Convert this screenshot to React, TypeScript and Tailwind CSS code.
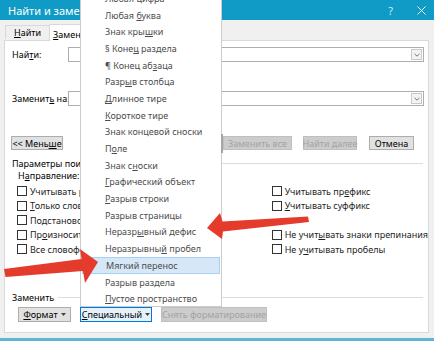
import React from 'react';

const font = "font-['Segoe_UI','Noto_Sans',sans-serif]";

const Check = ({ label }: { label: React.ReactNode }) => (
  <div className="flex items-center gap-[3px] h-[14.5px]">
    <span className="w-[10px] h-[10px] border border-[#333] bg-white shrink-0" />
    <span className="whitespace-nowrap text-[#1e1e1e]">{label}</span>
  </div>
);

const Button = ({
  children,
  className,
}: {
  children: React.ReactNode;
  className: string;
}) => (
  <div
    className={`flex items-center justify-center whitespace-nowrap border shrink-0 ${className}`}
  >
    {children}
  </div>
);

const Caret = () => (
  <svg width="5" height="3" viewBox="0 0 5 3" className="ml-[3px]">
    <path d="M0 0h5L2.5 3z" fill="#444" />
  </svg>
);

const ComboInput = () => (
  <div className="flex-1 h-[15px] border border-[#abadb3] bg-white flex justify-end">
    <div className="w-[11px] my-[1px] mr-[1px] border border-[#c9c9c9] bg-[#f3f3f3] flex items-center justify-center">
      <svg width="6" height="4" viewBox="0 0 6 4">
        <path d="M0.5 0.8L3 3.2L5.5 0.8" stroke="#666" strokeWidth="0.9" fill="none" />
      </svg>
    </div>
  </div>
);

const menuItems: React.ReactNode[] = [
  <>Любая цифра</>,
  <>Любая <u>б</u>уква</>,
  <>Знак кры<u>ш</u>ки</>,
  <>§ Коне<u>ц</u> раздела</>,
  <>¶ Конец аб<u>з</u>аца</>,
  <>Разр<u>ы</u>в столбца</>,
  <><u>Д</u>линное тире</>,
  <><u>К</u>ороткое тире</>,
  <>Знак концевой сноски</>,
  <>П<u>о</u>ле</>,
  <>Знак с<u>н</u>оски</>,
  <><u>Г</u>рафический объект</>,
  <><u>Р</u>азрыв строки</>,
  <>Разрыв страницы</>,
  <>Неразр<u>ы</u>вный дефис</>,
  <>Неразрывны<u>й</u> пробел</>,
  <>Мягкий перенос</>,
  <>Разрыв раздела</>,
  <><u>П</u>устое пространство</>,
];

export default function App() {
  return (
    <div
      className={`relative w-[434px] h-[341px] overflow-hidden bg-[#f0f0f0] flex flex-col text-[9px] leading-none text-black ${font}`}
    >
      {/* Title bar */}
      <div className="h-[20px] bg-[#0f9bc6] flex items-center pl-[8px] pr-[8px] text-white shrink-0">
        <span className="text-[11px]">Найти и заменить</span>
        <div className="ml-auto flex items-center">
          <span className="text-[11px] text-[#cfeaf5] mr-[24px]">?</span>
          <svg width="9" height="9" viewBox="0 0 9 9">
            <path d="M0.5 0.5L8.5 8.5M8.5 0.5L0.5 8.5" stroke="white" strokeWidth="1" />
          </svg>
        </div>
      </div>

      {/* Tabs */}
      <div className="h-[20px] flex items-end pl-[5px] shrink-0">
        <div className="h-[14px] px-[8px] flex items-center border-t border-l border-[#d9d9d9] bg-[#f0f0f0] mb-px">
          <span>
            <u>Н</u>айти
          </span>
        </div>
        <div className="h-[17px] pl-[3px] pr-[6px] flex items-center border-t border-l border-r border-[#d9d9d9] bg-white -mb-px z-[1] pt-[3px]">
          <span>
            <u>З</u>аменить
          </span>
        </div>
      </div>

      {/* Panel */}
      <div className="flex-1 mx-[4px] mr-[5px] border border-[#d9d9d9] bg-white flex flex-col">
        <div className="mt-[6px] h-[15px] flex items-center pl-[7px] pr-[4px]">
          <span className="w-[56px] shrink-0">
            Най<u>т</u>и:
          </span>
          <ComboInput />
        </div>
        <div className="mt-[29px] h-[15px] flex items-center pl-[7px] pr-[4px]">
          <span className="w-[56px] shrink-0 whitespace-nowrap">
            Заменит<u>ь</u> на:
          </span>
          <ComboInput />
        </div>

        <div className="mt-[30px] h-[14px] flex items-stretch pl-[6px] pr-[14px]">
          <Button className="w-[52px] bg-[#e1e1e1] border-[#adadad]">
            <span>&lt;&lt; Мень<u>ш</u>е</span>
          </Button>
          <div className="ml-auto flex items-stretch gap-[11px]">
            <Button className="w-[60px] bg-[#cccccc] border-[#bfbfbf] text-[#9a9a9a]">
              <span>Заменить</span>
            </Button>
            <Button className="w-[69px] bg-[#cccccc] border-[#bfbfbf] text-[#a3a3a3]">
              <span>Заменить все</span>
            </Button>
            <Button className="w-[54px] bg-[#cccccc] border-[#bfbfbf] text-[#a3a3a3]">
              <span>Найти далее</span>
            </Button>
            <Button className="w-[45px] bg-[#e1e1e1] border-[#adadad] ml-px">
              <span>Отмена</span>
            </Button>
          </div>
        </div>

        <div className="mt-[7px] h-[12px] flex items-center pl-[7px] pr-[5px]">
          <span className="whitespace-nowrap">Параметры поиска</span>
          <div className="flex-1 h-px bg-[#dcdcdc] ml-[4px]" />
        </div>
        <div className="h-[12px] flex items-center pl-[13px]">
          <span>
            Н<u>а</u>правление:
          </span>
        </div>

        <div className="mt-[3px] flex pl-[12px]">
          <div className="w-[265px] flex flex-col">
            <Check label={<>Учитывать <u>р</u>егистр</>} />
            <Check label={<><u>Т</u>олько слово целиком</>} />
            <Check label={<>По<u>д</u>становочные знаки</>} />
            <Check label={<>Пр<u>о</u>износится как</>} />
            <Check label={<>Все словофор<u>м</u>ы</>} />
          </div>
          <div className="flex flex-col">
            <Check label={<>Учитывать пр<u>е</u>фикс</>} />
            <Check label={<><u>У</u>читывать суффикс</>} />
            <div className="h-[14.5px]" />
            <Check label={<>Не учит<u>ы</u>вать знаки препинания</>} />
            <Check label={<>Не у<u>ч</u>итывать пробелы</>} />
          </div>
        </div>

        <div className="mt-[34.5px] h-[12px] flex items-center pl-[7px] pr-[5px]">
          <span>Заменить</span>
          <div className="flex-1 h-px bg-[#dcdcdc] ml-[4px]" />
        </div>
        <div className="mt-[4px] h-[15px] flex items-stretch gap-[9px] pl-[13px]">
          <Button className="w-[53px] bg-[#e1e1e1] border-[#adadad]">
            <span>
              <u>Ф</u>ормат
            </span>
            <Caret />
          </Button>
          <Button className="w-[72px] bg-[#e5f1fb] border-[#0078d7]">
            <span>
              <u>С</u>пециальный
            </span>
            <Caret />
          </Button>
          <Button className="w-[106px] bg-[#cccccc] border-[#bfbfbf] text-[#a3a3a3]">
            <span>Снять форматирование</span>
          </Button>
        </div>
      </div>

      <div className="h-[5px] shrink-0" />
      <div className="h-[3px] bg-[#5fb6d3] shrink-0" />

      {/* Dropdown menu */}
      <div className="absolute left-[80px] top-[-12px] w-[142px] h-[319px] bg-white border border-[#cccccc] pt-px z-10 text-[#4d4d4d]">
        {menuItems.map((item, i) => (
          <div
            key={i}
            className={
              i === 16
                ? 'h-[16.7px] flex items-center pl-[23px] mx-[1px] bg-[#d6e8f8] border border-[#a9d0f2] whitespace-nowrap'
                : 'h-[16.7px] flex items-center pl-[24px] whitespace-nowrap'
            }
          >
            <span>{item}</span>
          </div>
        ))}
        <div className="absolute right-[-2px] top-[145px] w-[2px] h-[19px] bg-[#a6a6a6]" />
      </div>

      {/* Red arrows */}
      <svg className="absolute inset-0 z-20 pointer-events-none" width="434" height="341" viewBox="0 0 434 341">
        <polygon
          points="207,228 220,213 222.5,221.5 308,216.5 309,222 223,231.5 222,239"
          fill="#e53b2d"
        />
        <polygon
          points="98,262 80,249 81.5,259 4,269 5.5,277 83,271 85,283"
          fill="#e53b2d"
        />
      </svg>
    </div>
  );
}
